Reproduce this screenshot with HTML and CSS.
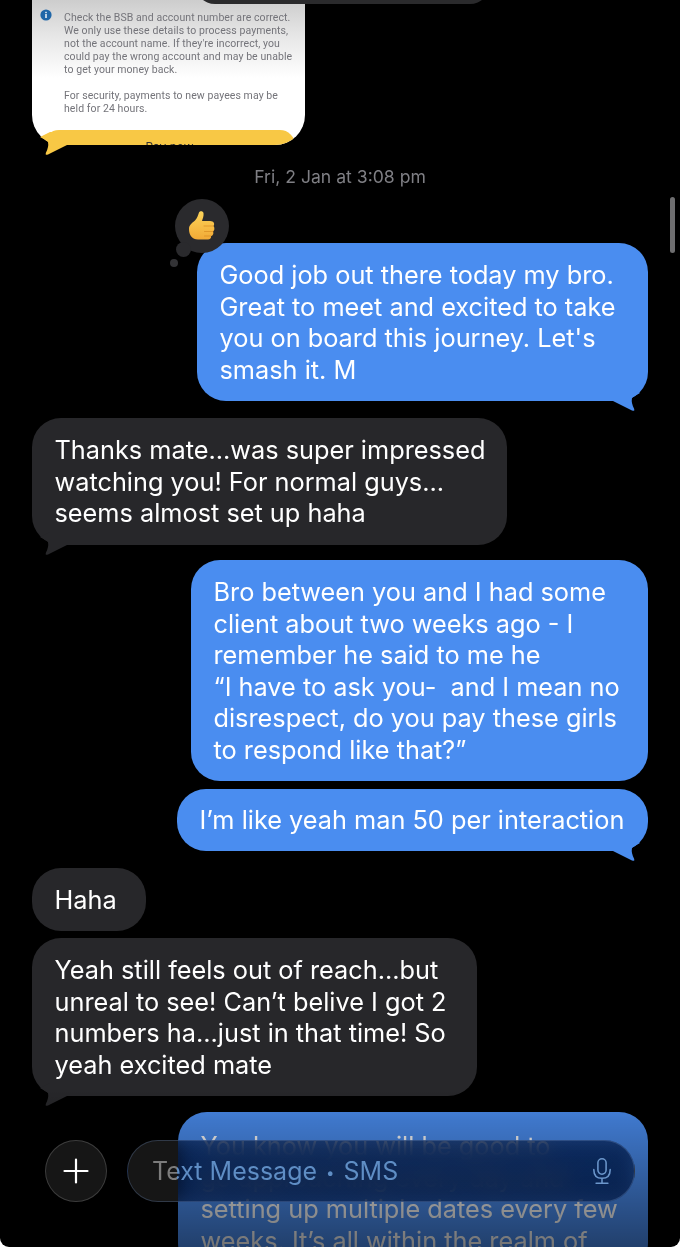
FILE: index.html
```html
<!DOCTYPE html>
<html lang="en">
<head>
<meta charset="utf-8">
<title>Messages</title>
<link rel="stylesheet" href="styles.css">
</head>
<body>
<svg class="defs" width="0" height="0" aria-hidden="true">
  <symbol id="tail" viewBox="0 0 30 25">
    <path d="M0 13 L3 13 L22 22.4 Q25 23.8 24.2 21 Q21 15 22 10 Q24 8 30 5 L20 0 L0 0 Z"/>
  </symbol>
</svg>
<main class="screen">
  <div class="prev-edge"></div>
  <div class="thread">
    <article class="card">
      <div class="card-note">
        <svg class="info" viewBox="0 0 12 12" aria-hidden="true">
          <circle cx="6" cy="6" r="5.6" fill="#1f66a8"/>
          <rect x="5.3" y="5" width="1.4" height="4" fill="#fff"/>
          <rect x="5.3" y="2.8" width="1.4" height="1.4" fill="#fff"/>
        </svg>
        <div class="card-copy">
          <p>Check the BSB and account number are correct.<br>We only use these details to process payments,<br>not the account name. If they're incorrect, you<br>could pay the wrong account and may be unable<br>to get your money back.</p>
          <p>For security, payments to new payees may be<br>held for 24 hours.</p>
        </div>
      </div>
      <div class="pay">Pay now</div>
    </article>
    <svg class="tail tail-in tail-yellow" aria-hidden="true"><use href="#tail"/></svg>

    <div class="stamp">Fri, 2 Jan at 3:08 pm</div>

    <div class="bubble out w451 ringed">
      <div class="reaction">
        <span class="dot-mid"></span><span class="dot-small"></span>
        <svg class="thumb" viewBox="0 0 27 30" aria-hidden="true">
          <defs><linearGradient id="tg" x1="0" y1="0" x2="0" y2="1"><stop offset="0" stop-color="#fcd45a"/><stop offset="1" stop-color="#f2aa36"/></linearGradient></defs>
          <path fill="url(#tg)" d="M1 19 C1 15 4 13 7 10.5 C9.5 8 10 5 11 2.5 C11.8 0.6 15 0.6 15.5 3 C16 6 14.5 9 14 11 L22 11 C26 11 27 14 25.5 16 C27 18 26.5 20.5 25 21.5 C26 23.5 25 25.5 23 26.2 C23.5 28 22 29.5 20 29.5 L10 29.5 C4 29.5 1 25 1 19 Z"/>
          <path fill="none" stroke="#d98a1f" stroke-width=".7" stroke-linecap="round" d="M16 16 H25 M16.5 21.5 H24.8 M16.5 26 H22.8"/>
        </svg>
      </div>
      Good job out there today my bro.<br>Great to meet and excited to take<br>you on board this journey. Let's<br>smash it. M
      <svg class="tail tail-out" aria-hidden="true"><use href="#tail"/></svg>
    </div>

    <div class="bubble in w475 gap-l">
      Thanks mate...was super impressed<br>watching you! For normal guys...<br>seems almost set up haha
      <svg class="tail tail-in" aria-hidden="true"><use href="#tail"/></svg>
    </div>

    <div class="bubble out w457 gap-m">
      Bro between you and I had some<br>client about two weeks ago - I<br>remember he said to me he<br>“I have to ask you-&nbsp; and I mean no<br>disrespect, do you pay these girls<br>to respond like that?”
    </div>

    <div class="bubble out w471 gap-s single">
      I’m like yeah man 50 per interaction
      <svg class="tail tail-out" aria-hidden="true"><use href="#tail"/></svg>
    </div>

    <div class="bubble in w114 gap-l single-tall">Haha</div>

    <div class="bubble in w445 gap-xs">
      Yeah still feels out of reach...but<br>unreal to see! Can’t belive I got 2<br>numbers ha...just in that time! So<br>yeah excited mate
      <svg class="tail tail-in" aria-hidden="true"><use href="#tail"/></svg>
    </div>

    <div class="bubble out w470 gap-last last">
      You know you will be good to<br>go approaching every day and<br>setting up multiple dates every few<br>weeks. It’s all within the realm of
    </div>
  </div>

  <div class="fade"></div>
  <div class="scrollbar"></div>

  <div class="composer">
    <button class="plus" aria-label="Add">
      <svg viewBox="0 0 26 26" aria-hidden="true"><path d="M13 1.5 V24.5 M1.5 13 H24.5" stroke="#fff" stroke-width="2.2" stroke-linecap="round"/></svg>
    </button>
    <div class="field">
      <span class="placeholder">Text Message <span class="sep">•</span> SMS</span>
      <svg class="mic" viewBox="0 0 22 30" aria-hidden="true">
        <rect x="6.5" y="1.5" width="9" height="17" rx="4.5"/>
        <path d="M2 13.5 C2 19.5 5.5 23 11 23 C16.5 23 20 19.5 20 13.5 M11 23 V28 M4.5 28.5 H17.5"/>
      </svg>
    </div>
  </div>
  <div class="corners"></div>
</main>
</body>
</html>
```
FILE: styles.css
```css
* { box-sizing: border-box; }
html, body { margin: 0; padding: 0; background: #000; }
.defs { position: absolute; }
.screen {
  position: relative;
  width: 680px;
  height: 1247px;
  overflow: hidden;
  background: #000;
  font-family: Inter, "Liberation Sans", sans-serif;
}
.corners {
  position: absolute;
  inset: 0;
  border-radius: 0 0 9px 9px;
  box-shadow: 0 0 0 12px #fff;
  clip-path: inset(1230px -12px -12px -12px);
  pointer-events: none;
  z-index: 6;
}
.thread {
  display: flex;
  flex-direction: column;
  padding: 0 32px;
}
.prev-edge {
  position: absolute;
  top: -30px;
  left: 195px;
  width: 295px;
  height: 34px;
  border-radius: 0 0 20px 20px;
  background: #2a2a2c;
  z-index: 2;
}
.card {
  width: 273px;
  height: 145px;
  display: flex;
  flex-direction: column;
  justify-content: space-between;
  border-radius: 0 0 30px 30px;
  overflow: hidden;
  background: linear-gradient(#cdcdcd 0, #e6e6e6 35px, #fff 78px);
}
.card-note { display: flex; padding-top: 11px; padding-left: 8px; }
.info { width: 12px; height: 12px; flex: none; margin-top: -2px; }
.card-copy {
  margin-left: 12px;
  font-family: Roboto, "Liberation Sans", sans-serif;
  font-size: 10.5px;
  letter-spacing: .08px;
  line-height: 13px;
  color: #74747a;
}
.card-copy p { margin: 0 0 13px; white-space: nowrap; }
.pay {
  height: 15px;
  margin: 0 10px 0 12px;
  flex: none;
  padding-top: 10px;
  border-radius: 15px 15px 0 0;
  background: #f8c845;
  color: #333;
  font-size: 12px;
  line-height: 14px;
  text-align: center;
  overflow: hidden;
}
.stamp {
  height: 98px;
  padding-top: 22px;
  text-align: center;
  color: #7f7f84;
  font-size: 17.6px;
  line-height: 20px;
}
.bubble {
  position: relative;
  padding: 16px 22.5px;
  border-radius: 29px;
  font-size: 25.3px;
  line-height: 31.5px;
  color: #fff;
  white-space: nowrap;
}
.out { align-self: flex-end; background: #4a8df0; }
.in { align-self: flex-start; background: #27272a; }
.w451 { width: 451px; }
.w475 { width: 475px; }
.w457 { width: 457px; }
.w471 { width: 471px; }
.w114 { width: 114px; }
.w445 { width: 445px; }
.w470 { width: 470px; }
.gap-xs { margin-top: 7px; }
.gap-s { margin-top: 8px; }
.gap-m { margin-top: 15.5px; }
.gap-l { margin-top: 17px; }
.gap-last { margin-top: 16px; }
.single { height: 62px; padding-top: 15px; padding-bottom: 15px; }
.single-tall { height: 63px; padding-top: 15.5px; padding-bottom: 15.5px; }
.last { padding-top: 18px; }
.ringed { box-shadow: 0 0 0 2px #000; z-index: 1; }
.tail {
  position: absolute;
  width: 30px;
  height: 25px;
}
.tail-out { right: 8px; bottom: -12px; fill: #4a8df0; }
.tail-in { left: 8px; bottom: -12px; fill: #27272a; transform: scaleX(-1); }
.tail-yellow {
  position: static;
  margin: -13px 0 -12px 8px;
  flex: none;
  fill: #f8c845;
  width: 30px;
}
.reaction {
  position: absolute;
  left: -22px;
  top: -44px;
  width: 54px;
  height: 54px;
  border-radius: 50%;
  background: #2a2a2d;
  z-index: -1;
}
.dot-mid, .dot-small {
  position: absolute;
  border-radius: 50%;
  background: #2a2a2d;
}
.dot-mid { left: 1px; top: 43px; width: 15px; height: 15px; }
.dot-small { left: -5px; top: 60px; width: 8px; height: 8px; background: #333336; }
.thumb { position: absolute; left: 13px; top: 11px; width: 27px; height: 30px; }
.fade {
  position: absolute;
  left: 0;
  right: 0;
  top: 1090px;
  bottom: 0;
  background: linear-gradient(rgba(0,0,0,0), rgba(0,0,0,.16) 30px, rgba(0,0,0,.55));
  z-index: 3;
}
.scrollbar {
  position: absolute;
  left: 670px;
  top: 197px;
  width: 5px;
  height: 56px;
  border-radius: 3px;
  background: #6e6e70;
}
.composer {
  position: absolute;
  left: 45px;
  top: 1140px;
  width: 590px;
  display: flex;
  gap: 20px;
  z-index: 4;
}
.plus {
  flex: none;
  width: 62px;
  height: 62px;
  padding: 0;
  display: flex;
  align-items: center;
  justify-content: center;
  border: 1px solid rgba(255,255,255,.17);
  border-radius: 50%;
  background: #161616;
}
.plus svg { width: 26px; height: 26px; }
.field {
  flex: 1;
  height: 62px;
  display: flex;
  align-items: center;
  justify-content: space-between;
  padding: 0 22px 0 24px;
  border: 1px solid rgba(120,150,200,.28);
  border-radius: 31px;
  background: linear-gradient(90deg, #161616 50px, rgba(8,28,70,.55) 50px);
  -webkit-backdrop-filter: blur(10px) brightness(.5) saturate(1.6);
  backdrop-filter: blur(10px) brightness(.5) saturate(1.6);
}
.placeholder {
  font-size: 25px;
  white-space: nowrap;
  background: linear-gradient(90deg, #7c7c7c 25px, #5f8ec5 25px);
  -webkit-background-clip: text;
  background-clip: text;
  color: transparent;
}
.sep { font-size: 15px; vertical-align: 2px; margin: 0 2px; }
.mic { width: 20px; height: 28px; fill: none; stroke: #6c97cc; stroke-width: 1.7; stroke-linecap: round; }
```
